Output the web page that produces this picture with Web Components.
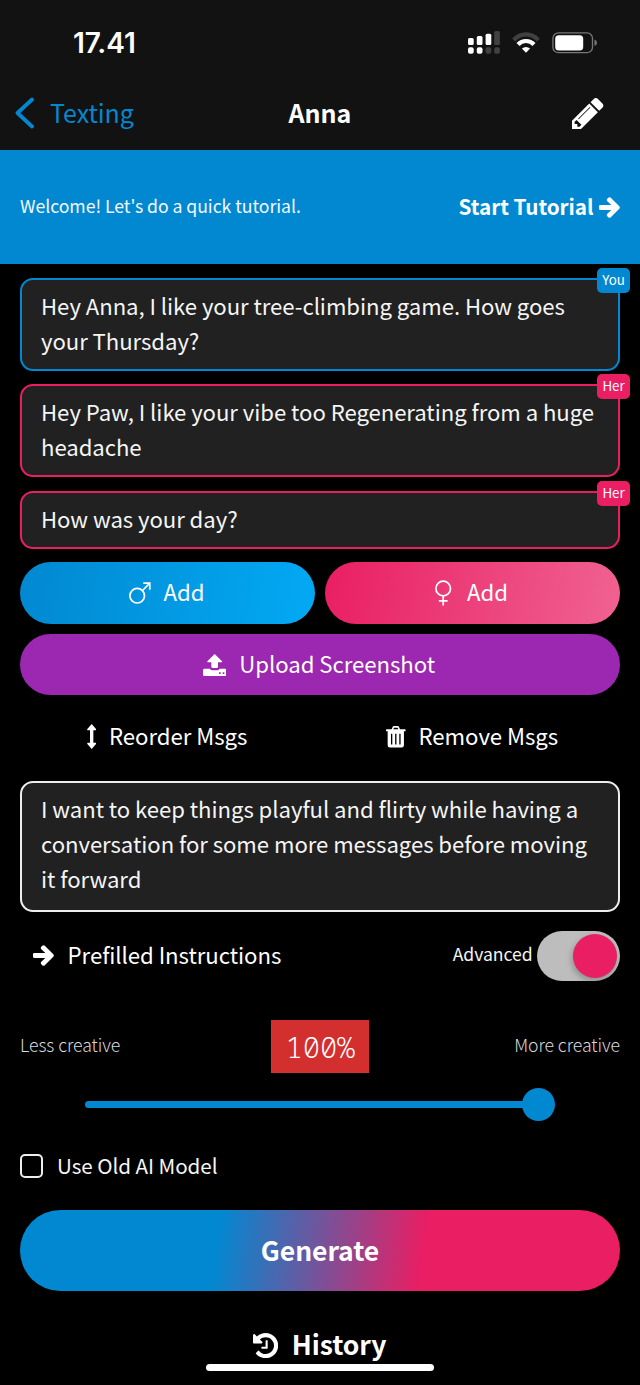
<!DOCTYPE html>
<html lang="en">
<head>
<meta charset="utf-8">
<title>Anna</title>
<style>
html, body { margin: 0; background: #000; }
body { font-family: "Noto Sans CJK SC", "Noto Sans", sans-serif; color: #f5f5f5; letter-spacing: -0.055px; }
</style>
</head>
<body>
<chat-screen></chat-screen>
<script>
const define = (name, html, setup) => {
  const tpl = document.createElement('template');
  tpl.innerHTML = html;
  customElements.define(name, class extends HTMLElement {
    constructor() {
      super();
      this.attachShadow({ mode: 'open' }).append(tpl.content.cloneNode(true));
    }
    connectedCallback() { if (setup) setup(this, this.shadowRoot); }
  });
};

/* name: [width, height, viewBox, markup] */
const ICONS = {
  back: [20, 32, '0 0 20 32', '<path d="M17 2.500 2.500 16 17 29.500" fill="none" stroke="#0288d1" stroke-width="3.800" stroke-linecap="round" stroke-linejoin="round"/>'],
  pencil: [31.4, 31.4, '128 149 1515 1515', '<path d="M491 1536l91-91-235-235-91 91v107h128v128h107zM1014 608q0-22-22-22-10 0-17 7l-542 542q-7 7-7 17 0 22 22 22 10 0 17-7l542-542q7-7 7-17zM960 416l416 416-832 832h-416v-416zM1643 512q0 53-37 90l-166 166-416-416 166-165q36-38 90-38 53 0 91 38l235 234q37 39 37 91z"/>'],
  arrow: [20.6, 21, '-12 24 472 464', '<path stroke="#fff" stroke-width="34" stroke-linejoin="round" d="M190.5 66.9l22.2-22.2c9.4-9.4 24.6-9.4 33.9 0L441 239c9.400 9.400 9.400 24.600 0 33.900L246.600 467.300c-9.400 9.400-24.600 9.400-33.900 0l-22.200-22.200c-9.500-9.500-9.300-25 .4-34.300L311.400 296H24c-13.300 0-24-10.700-24-24v-32c0-13.300 10.700-24 24-24h287.400L190.900 101.200c-9.800-9.300-10-24.800-.4-34.300z"/>'],
  male: [22, 22, '0 0 22 22', '<g fill="none" stroke="#fff" stroke-width="1.700"><circle cx="8.200" cy="13.700" r="7.300"/><path d="M13.500 8.500 20.800 1.200M14.300 1.200h6.500v6.500"/></g>'],
  female: [17, 26, '0 0 17 26', '<g fill="none" stroke="#fff" stroke-width="1.700"><circle cx="8.200" cy="8.500" r="7.300"/><path d="M8.200 15.900v9.600M3.800 20.800h8.800"/></g>'],
  upload: [23.4, 22, '0 0 70 66', '<path d="M35 0 57 22q2 3-2 3H45v13q0 4-4 4H29q-4 0-4-4V25H15q-4 0-2-3z"/><path fill-rule="evenodd" d="M4 44h17q1 5 7 5h14q6 0 7-5h17q4 0 4 4v14q0 4-4 4H4q-4 0-4-4V48q0-4 4-4zM48 55v5h5v-5zM59 55v5h5v-5z"/>'],
  updown: [9.4, 25, '0 0 28 75', '<path d="M14 0 27 15q2 4-2 4h-6v37h6q4 0 2 4L14 75 1 60q-2-4 2-4h6V19H3q-4 0-2-4z"/>'],
  trash: [19.6, 21.6, '0 0 59 65', '<path fill-rule="evenodd" d="M17 10 20 2q1-2 4-2h11q3 0 4 2l3 8h15q2 0 2 2v2q0 2-2 2h-3v42q0 7-7 7H12q-7 0-7-7V16H2q-2 0-2-2v-2q0-2 2-2zM22 10h15l-2-5H24zM15 23v33h4V23zM27.500 23v33h4V23zM40 23v33h4V23z"/>'],
  history: [25.2, 25.2, '128 128 1536 1536', '<path d="M1664 896q0 156-61 298t-164 245-245 164-298 61q-172 0-327-72.500t-264-204.500q-7-10-6.500-22.500t8.500-20.500l137-138q10-9 25-9 16 2 23 12 73 95 179 147t225 52q104 0 198.500-40.500t163.500-109.500 109.500-163.500 40.500-198.500-40.500-198.500-109.500-163.500-163.500-109.500-198.500-40.500q-98 0-188 35.500t-160 101.500l137 138q31 30 14 69-17 40-59 40h-448q-26 0-45-19t-19-45v-448q0-42 40-59 39-17 69 14l130 129q107-101 244.500-156.500t284.500-55.500q156 0 298 61t245 164 164 245 61 298zM1024 608v448q0 14-9 23t-23 9h-320q-14 0-23-9t-9-23v-64q0-14 9-23t23-9h224v-352q0-14 9-23t23-9h64q14 0 23 9t9 23z"/>'],
  signal: [32, 23, '0 0 32 23', '<rect y="7" width="5.700" height="7" rx="1.500"/><rect x="8.800" y="5" width="5.700" height="9" rx="1.500"/><rect x="17.600" y="2.700" width="5.700" height="11.300" rx="1.500"/><rect x="26.200" width="5.700" height="14" rx="1.500" fill="#414141"/><rect y="16.300" width="5.700" height="6.400" rx="2"/><rect x="8.800" y="16.300" width="5.700" height="6.400" rx="2"/><rect x="17.600" y="16.300" width="5.700" height="6.400" rx="2" fill="#414141"/><rect x="26.200" y="16.300" width="5.700" height="6.400" rx="2" fill="#414141"/>'],
  wifi: [28, 21, '0 0 28 21', '<g fill="none" stroke-width="4.200"><path d="M1.700 8Q7 2.300 14 2.300T26.300 8" stroke="#414141"/><path d="M6 12.500Q9.300 9 14 9t8 3.500" stroke="#fff"/></g><path d="M9.900 16.600q4.100-3.200 8.200 0L14 20.800z"/>'],
  battery: [46, 22, '0 0 46 22', '<rect x=".9" y=".9" width="39.600" height="19.800" rx="5.500" fill="none" stroke="#777" stroke-width="1.300"/><rect x="3.200" y="3.200" width="28" height="15.200" rx="3.500"/><path d="M42.500 7.500q2.500 1 2.500 3.300t-2.500 3.300z" fill="#777"/>']
};
define('ui-icon', `<style>:host{display:block;flex:none;line-height:0}svg{display:block;fill:#fff}</style><svg></svg>`, (el, root) => {
  const [w, h, box, body] = ICONS[el.getAttribute('name')];
  const svg = root.querySelector('svg');
  svg.setAttribute('width', w); svg.setAttribute('height', h);
  svg.setAttribute('viewBox', box); svg.innerHTML = body;
});

define('status-bar', `<style>
:host{display:flex;align-items:center;height:85px;padding:0 42px 0 73px;box-sizing:border-box;background:#121212}
time{font:600 28px/34px Inter,sans-serif;color:#fff;flex:1}
.wifi{margin-left:12px}.bat{margin-left:12px}
</style><time>17.41</time><ui-icon name="signal"></ui-icon><ui-icon class="wifi" name="wifi"></ui-icon><ui-icon class="bat" name="battery"></ui-icon>`);

define('nav-bar', `<style>
:host{display:grid;grid-template-columns:1fr auto 1fr;align-items:center;height:64.500px;padding:0 36.300px 8px 15px;box-sizing:border-box;background:#121212;font-size:25px;line-height:30px}
.back{display:flex;align-items:center;gap:15px;color:#0288d1}
span,h1{padding-bottom:2px}
h1{margin:0;font-size:25px;font-weight:700;color:#fff;position:relative;left:10.500px}
ui-icon:last-child{justify-self:end}
</style><div class="back"><ui-icon name="back"></ui-icon><span>Texting</span></div><h1><slot></slot></h1><ui-icon name="pencil"></ui-icon>`);

define('tutorial-banner', `<style>
:host{display:flex;align-items:center;justify-content:space-between;height:114.500px;padding:0 20px;box-sizing:border-box;background:#0288d1}
p{margin:0;padding-bottom:4.500px;font-size:17.680px;line-height:26px;color:#f3f8fc}
div{display:flex;align-items:center;gap:6px;padding-top:1px;font-size:20.700px;line-height:26px;font-weight:700;color:#fff}
span{padding-bottom:2px}
</style><p><slot></slot></p><div><span>Start Tutorial</span><ui-icon name="arrow"></ui-icon></div>`);

define('chat-bubble', `<style>
:host{--tone:#e91e63;display:block;position:relative;box-sizing:border-box;background:#212121;border:2px solid var(--tone);border-radius:13px;padding:8.400px 19px 11px 19px;font-size:22.150px;line-height:35px;color:#f5f5f5}
:host([from=You]){--tone:#0288d1}
:host([from=note]){--tone:#eee;padding-bottom:13.600px;padding-top:7.900px}
b{position:absolute;top:-12px;right:-12px;width:33px;height:25px;border-radius:5px;background:var(--tone);font-size:13.300px;line-height:23px;font-weight:400;text-align:center;color:#fff}
:host([from=note]) b{display:none}
</style><slot></slot><b></b>`, (el, root) => {
  const from = el.getAttribute('from');
  root.querySelector('b').textContent = from === 'note' ? '' : from;
});

define('pill-button', `<style>
:host{display:flex;align-items:center;justify-content:center;gap:13px;height:61.500px;border-radius:31px;box-sizing:border-box;color:#fff;font-size:22.200px;line-height:30px}
:host([kind=male]){padding-right:2px;background:linear-gradient(100deg,#0288d1,#03a9f4)}
:host([kind=female]){gap:15px;padding-right:2px;background:linear-gradient(100deg,#e91e63,#f06292)}
:host([kind=upload]){padding-right:2px;background:#9c27b0}
:host([kind=generate]){height:81px;border-radius:41px;background:linear-gradient(97deg,#0288d1 33%,#e91e63 67%);font-size:26.500px;font-weight:700}
:host([kind=generate]) span{padding-bottom:1.500px}
:host([kind=plain]){height:36px}
:host([kind=history]){height:36px;gap:14px;padding-right:1px;font-size:26.500px;font-weight:700}
span{padding-bottom:3px}
:host([kind=male]) span,:host([kind=female]) span{padding-bottom:4.500px}
</style><slot name="icon"></slot><span><slot></slot></span>`);

define('toggle-switch', `<style>
:host{display:flex;align-items:center;gap:4px;font-size:17.600px;line-height:26px}
span{padding-bottom:3px}
i{display:flex;justify-content:flex-end;align-items:center;width:83.500px;height:50.500px;border-radius:26px;background:#bdbdbd;padding-right:3px;box-sizing:border-box}
i::after{content:"";width:44.500px;height:44.500px;border-radius:50%;background:#e91e63;box-shadow:-1px 3px 6px #0004}
</style><span><slot></slot></span><i></i>`);

define('creativity-slider', `<style>
:host{display:block}
.top{display:grid;grid-template-columns:1fr auto 1fr;align-items:center;height:53px;font-size:17.700px;line-height:26px;font-weight:300;color:#d8d8d8}
.top span{padding-bottom:5.500px}
.top span:last-child{text-align:right}
output{width:98px;height:53px;background:#d32f2f;color:#fff;font:350 29px/53px "Noto Sans Mono","Liberation Mono",monospace;text-align:center}
.rail{display:flex;align-items:center;height:33px;margin:15px 65px 0}
.fill{width:438px;height:7px;border-radius:4px 0 0 4px;background:#0288d1}
.knob{width:33px;height:33px;border-radius:50%;background:#0288d1;margin-left:-1px}
</style><div class="top"><span>Less creative</span><output>100%</output><span>More creative</span></div><div class="rail"><div class="fill"></div><div class="knob"></div></div>`);

define('check-box', `<style>
:host{display:flex;align-items:center;gap:14px;height:24px;font-size:20.600px;line-height:28px}
i{width:23px;height:23.500px;box-sizing:border-box;border:2px solid #eee;border-radius:5px}
span{padding-bottom:1px}
</style><i></i><span><slot></slot></span>`);

define('chat-screen', `<style>
:host{display:flex;flex-direction:column;width:640px;height:1385px;overflow:hidden;background:#000}
main{display:flex;flex-direction:column;padding:13.500px 20px 0}
.msgs{display:flex;flex-direction:column;gap:13.200px}
.pair{display:grid;grid-template-columns:1fr 1fr;gap:10px;margin:13.300px 0 10px}
.tools{display:grid;grid-template-columns:294px 296px;gap:10px;margin:23.500px 0 26.300px}
.opts{display:flex;align-items:center;justify-content:space-between;margin-top:19px}
.prefill{margin:0 0 1px 13px;gap:14px}
creativity-slider{margin-top:38.700px}
check-box{margin-top:33px}
.gen{margin-top:32.200px}
.hist{margin-top:36.500px}
.home{width:228px;height:7.500px;border-radius:4px;background:#fff;align-self:center}
</style>
<status-bar></status-bar><nav-bar>Anna</nav-bar>
<tutorial-banner>Welcome! Let's do a quick tutorial.</tutorial-banner>
<main>
<div class="msgs">
<chat-bubble from="You">Hey Anna, I like your tree-climbing game. How goes your Thursday?</chat-bubble>
<chat-bubble from="Her">Hey Paw, I like your vibe too Regenerating from a huge headache</chat-bubble>
<chat-bubble from="Her">How was your day?</chat-bubble>
</div>
<div class="pair">
<pill-button kind="male"><ui-icon slot="icon" name="male"></ui-icon>Add</pill-button>
<pill-button kind="female"><ui-icon slot="icon" name="female"></ui-icon>Add</pill-button>
</div>
<pill-button kind="upload"><ui-icon slot="icon" name="upload"></ui-icon>Upload Screenshot</pill-button>
<div class="tools">
<pill-button kind="plain"><ui-icon slot="icon" name="updown"></ui-icon>Reorder Msgs</pill-button>
<pill-button kind="plain"><ui-icon slot="icon" name="trash"></ui-icon>Remove Msgs</pill-button>
</div>
<chat-bubble from="note">I want to keep things playful and flirty while having a conversation for some more messages before moving it forward</chat-bubble>
<div class="opts">
<pill-button class="prefill" kind="plain"><ui-icon slot="icon" name="arrow"></ui-icon>Prefilled Instructions</pill-button>
<toggle-switch>Advanced</toggle-switch>
</div>
<creativity-slider></creativity-slider>
<check-box>Use Old AI Model</check-box>
<pill-button class="gen" kind="generate">Generate</pill-button>
<pill-button class="hist" kind="history"><ui-icon slot="icon" name="history"></ui-icon>History</pill-button>
<div class="home"></div>
</main>`);
</script>
</body>
</html>
